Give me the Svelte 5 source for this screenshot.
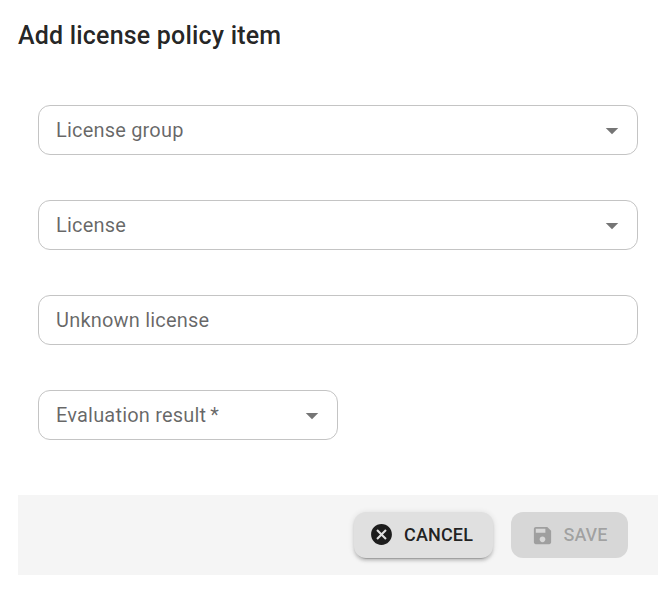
<script>
  const fields = [
    { label: 'License group', select: true },
    { label: 'License', select: true },
    { label: 'Unknown license', select: false },
    { label: 'Evaluation result', select: true, required: true, half: true }
  ];
</script>

<main>
  <h1>Add license policy item</h1>
  <form>
    {#each fields as field}
      <div class="field" class:half={field.half}>
        <span class="label">{field.label}{#if field.required}<span class="star">*</span>{/if}</span>
        {#if field.select}
          <svg width="30" height="30" viewBox="0 -0.4 24 24"><path d="M7 10l5 5 5-5z" /></svg>
        {/if}
      </div>
    {/each}
  </form>
  <footer>
    <button class="cancel" type="button">
      <svg width="25" height="25" viewBox="0 0 24 24"><path d="M12 2C6.47 2 2 6.47 2 12s4.47 10 10 10 10-4.47 10-10S17.53 2 12 2zm5 13.59L15.59 17 12 13.41 8.41 17 7 15.59 10.59 12 7 8.41 8.41 7 12 10.59 15.59 7 17 8.41 13.41 12 17 15.59z" /></svg>
      <span>CANCEL</span>
    </button>
    <button class="save" type="button" disabled>
      <svg width="23" height="23" viewBox="0 0 24 24"><path d="M17 3H5c-1.11 0-2 .9-2 2v14c0 1.1.89 2 2 2h14c1.1 0 2-.9 2-2V7l-4-4zm-5 16c-1.66 0-3-1.34-3-3s1.34-3 3-3 3 1.34 3 3-1.34 3-3 3zm3-10H5V5h10v4z" /></svg>
      <span>SAVE</span>
    </button>
  </footer>
</main>

<style>
  :global(body) { background: #fff; overflow: hidden; }
  main { box-sizing: border-box; height: 589px; padding: 16px 12px 0 18px; font-family: Roboto, sans-serif; }
  h1 { margin: 0; height: 40px; font-size: 25px; line-height: 40px; font-weight: 500; letter-spacing: 0.19px; color: rgba(0, 0, 0, 0.87); }
  form { display: flex; flex-direction: column; gap: 45px; padding: 49px 20px 55px; }
  .field { box-sizing: border-box; width: 100%; height: 50px; display: flex; align-items: center; justify-content: space-between; border: 1px solid #c4c4c4; border-radius: 12px; padding: 0 10px 0 17px; }
  .half { width: 300px; }
  .label { font-size: 20px; line-height: 29px; letter-spacing: 0.19px; color: rgba(0, 0, 0, 0.6); }
  .star { margin-left: 4px; }
  svg { display: block; flex: none; fill: currentColor; }
  .field svg { color: rgba(0, 0, 0, 0.54); }
  footer { box-sizing: border-box; height: 80px; padding-right: 30px; background: #f5f5f5; display: flex; align-items: center; justify-content: flex-end; gap: 18px; }
  button { box-sizing: border-box; height: 46px; border: 0; border-radius: 12px; display: flex; align-items: center; font: 500 18px/30px Roboto, sans-serif; }
  .cancel { width: 139px; padding: 0 0 0 15px; gap: 10px; letter-spacing: 0.15px; background: #e0e0e0; color: rgba(0, 0, 0, 0.87); box-shadow: 0 4px 1px -3px rgba(0, 0, 0, 0.2), 0 3px 3px rgba(0, 0, 0, 0.14), 0 1px 6px rgba(0, 0, 0, 0.12); }
  .cancel svg { margin-top: -1px; }
  .save { width: 117px; padding: 0 0 0 20px; gap: 9.5px; background: rgba(0, 0, 0, 0.12); color: rgba(0, 0, 0, 0.26); }
</style>
